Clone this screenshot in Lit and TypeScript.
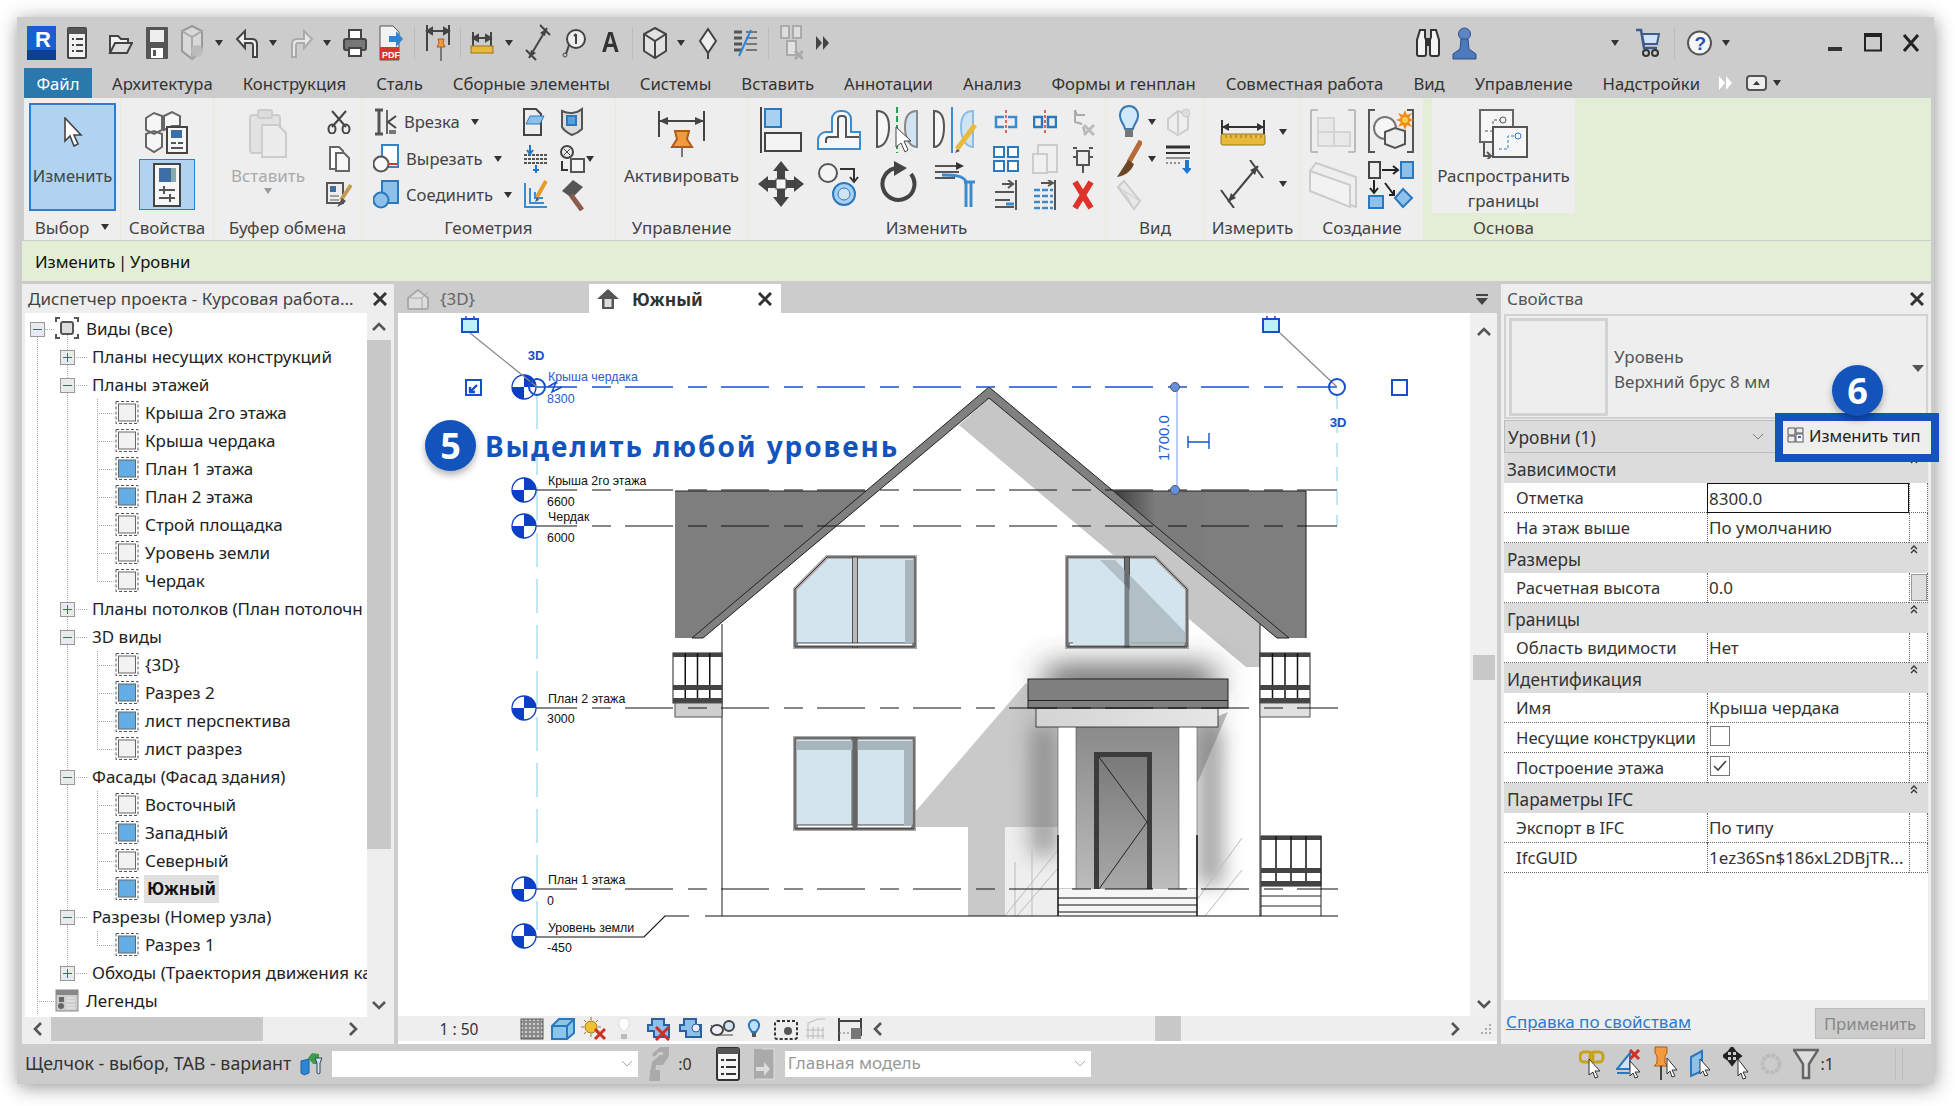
import { LitElement, html, css, svg } from "lit";
import { customElement } from "lit/decorators.js";

// ---- small drawing helpers -------------------------------------------------
const ic = (w: number, h: number, body: unknown) => html`<svg class="ic" width=${w} height=${h} viewBox="0 0 ${w} ${h}">${body}</svg>`;
const caret = () => html`<svg class="caret" width="8" height="6" viewBox="0 0 8 6"><path d="M0 0H8L4 6Z" fill="#333"/></svg>`;

const I: Record<string, unknown> = {
  // quick access bar
  rlogo: ic(30, 34, svg`<rect x="1" y="0" width="29" height="34" fill="#1a5fd0"/><rect x="1" y="24" width="29" height="10" fill="#0d3f94"/><text x="9" y="21" font-size="22" font-weight="700" fill="#fff" font-family="Liberation Sans">R</text>`),
  doc: ic(20, 32, svg`<rect x="1" y="1" width="18" height="30" rx="1" fill="#f2f2f2" stroke="#444" stroke-width="2"/><rect x="1" y="1" width="18" height="6" fill="#555"/><path d="M5 12h2M9 12h7M5 18h2M9 18h7M5 24h2M9 24h7" stroke="#444" stroke-width="2"/>`),
  open: ic(25, 26, svg`<path d="M2 23V6h8l3 3h7v5" fill="#f2f2f2" stroke="#444" stroke-width="2"/><path d="M2 23l5-10h17l-5 10Z" fill="#ddd" stroke="#444" stroke-width="2"/>`),
  save: ic(24, 34, svg`<rect x="1" y="1" width="22" height="32" rx="1" fill="#555"/><rect x="5" y="4" width="14" height="12" fill="#eee"/><rect x="6" y="22" width="12" height="10" fill="#fff"/><rect x="8" y="24" width="3" height="6" fill="#555"/>`),
  sync: ic(25, 36, svg`<path d="M12 1l10 5v20l-10 8-10-8V6Z" fill="#d8d8d8" stroke="#999" stroke-width="2"/><path d="M2 6l10 6 10-6M12 12v22" stroke="#aaa" stroke-width="2" fill="none"/><circle cx="17" cy="26" r="6" fill="#bbb"/>`),
  undo: ic(25, 32, svg`<path d="M22 30V17c0-3-2-5-5-5H10V4L2 12l8 9v-5h6c2 0 2 1 2 3v11Z" fill="#eee" stroke="#444" stroke-width="2"/>`),
  redo: ic(24, 32, svg`<path d="M2 30V17c0-3 2-5 5-5h7V4l8 8-8 9v-5H8c-2 0-2 1-2 3v11Z" fill="#e6e6e6" stroke="#aaa" stroke-width="2"/>`),
  print: ic(24, 30, svg`<rect x="6" y="2" width="12" height="9" fill="#fff" stroke="#444" stroke-width="2"/><rect x="1" y="11" width="22" height="11" rx="2" fill="#777" stroke="#444" stroke-width="2"/><rect x="6" y="20" width="12" height="8" fill="#fff" stroke="#444" stroke-width="2"/>`),
  pdf: ic(24, 36, svg`<path d="M1 1h13l6 6v28H1Z" fill="#f2f2f2" stroke="#555"/><rect x="1" y="22" width="19" height="13" fill="#d6372c"/><text x="3" y="33" font-size="9" font-weight="700" fill="#fff" font-family="Liberation Sans">PDF</text><path d="M10 11h7V6l7 8-7 8v-5h-7Z" fill="#2c86d6"/>`),
  dimpin: ic(26, 38, svg`<path d="M2 1v26M24 1v20" stroke="#444" stroke-width="2"/><path d="M2 7h22M2 7l5-3v6ZM24 7l-5-3v6Z" stroke="#444" stroke-width="2" fill="#444"/><path d="M13 15h6l-1 4 2 4h-8l2-4Z" fill="#f29a3e" stroke="#b0591b"/><path d="M16 23v14" stroke="#777" stroke-width="2"/>`),
  aligndim: ic(24, 28, svg`<path d="M3 3v14M21 3v14M3 9h18M3 9l5-3v6ZM21 9l-5-3v6Z" stroke="#444" stroke-width="2" fill="#444"/><rect x="1" y="17" width="22" height="7" fill="#e8b93a" stroke="#97761e"/>`),
  diag: ic(26, 38, svg`<path d="M4 34L22 4M1 26l10 10M15 1l10 10" stroke="#444" stroke-width="2"/><path d="M4 34l2-8 5 3ZM22 4l-2 8-5-3Z" fill="#444"/>`),
  tag: ic(24, 30, svg`<circle cx="14" cy="11" r="9" fill="#eee" stroke="#444" stroke-width="2"/><path d="M14 6v10M12 8l2-2" stroke="#444" stroke-width="2"/><path d="M7 17L4 26" stroke="#444" stroke-width="2"/><circle cx="3" cy="27" r="2" fill="none" stroke="#444"/>`),
  cube: ic(24, 32, svg`<path d="M12 1l11 6v17l-11 7-11-7V7Z" fill="#e2e2e2" stroke="#444" stroke-width="2"/><path d="M1 7l11 7 11-7M12 14v17" stroke="#444" stroke-width="2" fill="none"/>`),
  gem: ic(20, 32, svg`<path d="M10 2l8 12-8 12-8-12Z" fill="#eee" stroke="#444" stroke-width="2"/><path d="M10 26v6" stroke="#444" stroke-width="2"/>`),
  thin: ic(25, 28, svg`<path d="M1 3h8M1 9h8M1 15h8M1 21h8" stroke="#555" stroke-width="3"/><path d="M13 3h11M13 9h11M13 15h11M13 21h11" stroke="#777" stroke-width="2"/><path d="M6 27L18 1" stroke="#2c86d6" stroke-width="2"/>`),
  greyq: ic(23, 36, svg`<rect x="1" y="1" width="8" height="12" fill="#ddd" stroke="#aaa" stroke-width="2"/><rect x="13" y="1" width="8" height="12" fill="#ddd" stroke="#aaa" stroke-width="2"/><rect x="7" y="16" width="9" height="14" fill="#e2e2e2" stroke="#aaa" stroke-width="2"/><path d="M15 26l8 8M23 26l-8 8" stroke="#aaa" stroke-width="3"/>`),
  more: ic(15, 18, svg`<path d="M1 2l6 7-6 7ZM8 2l6 7-6 7Z" fill="#444"/>`),
  binoc: ic(24, 30, svg`<g fill="#f4f4f4" stroke="#333" stroke-width="2"><path d="M4 2h5v7l1 3v14a2 2 0 0 1-2 2H3a2 2 0 0 1-2-2V12Z"/><path d="M20 2h-5v7l-1 3v14a2 2 0 0 0 2 2h5a2 2 0 0 0 2-2V12Z"/></g><rect x="10" y="10" width="4" height="8" fill="#333"/>`),
  user: ic(25, 34, svg`<circle cx="12.5" cy="8" r="6" fill="#5f86c4" stroke="#2d4f88"/><path d="M9 13h7l1 10 7 5v5H1v-5l7-5Z" fill="#4f79bd" stroke="#2d4f88"/>`),
  cart: ic(25, 30, svg`<path d="M1 2h5l3 18h13" fill="none" stroke="#3c5a8c" stroke-width="2.5"/><path d="M7 6h17l-2 10H9Z" fill="#cfe3f2" stroke="#3c5a8c" stroke-width="2"/><circle cx="11" cy="25" r="3" fill="none" stroke="#333" stroke-width="2"/><circle cx="20" cy="25" r="3" fill="none" stroke="#333" stroke-width="2"/>`),
  help: ic(25, 26, svg`<circle cx="12.5" cy="13" r="11.5" fill="#f6f6f6" stroke="#555" stroke-width="2"/><text x="7.5" y="20" font-size="19" font-weight="700" fill="#2752b0" font-family="Liberation Sans">?</text>`),
  tabicon: ic(21, 16, svg`<rect x="1" y="1" width="19" height="14" rx="3" fill="#eee" stroke="#555" stroke-width="2"/><path d="M7 10l3.5-4 3.5 4Z" fill="#333"/>`),
  // ribbon
  cursor: ic(20, 30, svg`<path d="M2 1v23l5-5 4 10 4-2-4-9h7Z" fill="#fff" stroke="#444" stroke-width="1.6"/>`),
  typeprops: ic(46, 46, svg`<path d="M2 10l8-5 8 3v14l-8 4-8-4Z M20 8l8-4 8 4v10h-8l-8 4Z M2 26l8-3 8 3v13l-8 5-8-5Z" fill="#f6f6f6" stroke="#666" stroke-width="2"/><rect x="23" y="19" width="20" height="26" fill="#f6f6f6" stroke="#444" stroke-width="2"/><rect x="27" y="22" width="11" height="8" fill="#3d6ea5"/><path d="M27 35h5M34 35h5M27 40h12" stroke="#555" stroke-width="2"/>`),
  props: ic(28, 44, svg`<rect x="1" y="1" width="26" height="42" fill="#f6f6f6" stroke="#444" stroke-width="2"/><rect x="6" y="5" width="12" height="14" fill="#3d6ea5"/><rect x="18" y="5" width="5" height="14" fill="#8aa"/><path d="M6 27h16M6 35h16M11 23v8M17 31v8" stroke="#555" stroke-width="2"/>`),
  paste: ic(40, 50, svg`<rect x="2" y="6" width="30" height="38" rx="3" fill="#e2e2e2" stroke="#ccc" stroke-width="2"/><rect x="10" y="1" width="14" height="8" rx="2" fill="#ddd" stroke="#ccc" stroke-width="2"/><path d="M14 16h16l8 8v24H14Z" fill="#ececec" stroke="#ccc" stroke-width="2"/>`),
  scissors: ic(24, 24, svg`<path d="M5 1l14 16M19 1L5 17" stroke="#444" stroke-width="2"/><ellipse cx="5" cy="19" rx="3.5" ry="4.5" fill="none" stroke="#444" stroke-width="2"/><ellipse cx="19" cy="19" rx="3.5" ry="4.5" fill="none" stroke="#444" stroke-width="2"/>`),
  copy: ic(24, 26, svg`<path d="M3 1h9l4 4v18H3Z" fill="#fff" stroke="#666" stroke-width="2"/><path d="M9 7h8l5 5v13H9Z" fill="#f6f6f6" stroke="#666" stroke-width="2"/>`),
  matchbrush: ic(26, 26, svg`<rect x="1" y="1" width="16" height="20" fill="#eee" stroke="#555" stroke-width="2"/><rect x="4" y="4" width="6" height="6" fill="#3d6ea5"/><path d="M4 14h9M4 18h9" stroke="#555"/><path d="M25 3L15 18" stroke="#c79a52" stroke-width="4"/><path d="M16 16l-5 9 6-3 3-3Z" fill="#555"/>`),
  cutin: ic(24, 28, svg`<path d="M2 2h8M2 26h8M6 2v24" stroke="#555" stroke-width="3"/><path d="M14 2v24" stroke="#666" stroke-width="2"/><path d="M23 8l-8 6 8 6" fill="none" stroke="#444" stroke-width="2"/><rect x="16" y="22" width="7" height="4" fill="#777"/>`),
  cutout: ic(26, 30, svg`<rect x="9" y="1" width="16" height="22" fill="#fff" stroke="#3d80c0" stroke-width="2"/><circle cx="8" cy="20" r="7.5" fill="#f8f8f8" stroke="#555" stroke-width="2"/><path d="M15 20h9" stroke="#d6372c" stroke-width="2"/>`),
  join: ic(26, 30, svg`<rect x="9" y="1" width="16" height="22" fill="#8dc1ea" stroke="#2c78bf" stroke-width="2"/><circle cx="8" cy="20" r="7.5" fill="#8dc1ea" stroke="#2c78bf" stroke-width="2"/>`),
  g1: ic(26, 30, svg`<path d="M2 2h12l5 5v21H2Z" fill="#eee" stroke="#444" stroke-width="2"/><path d="M22 9H8l-4 8h14Z" fill="#8dc1ea" stroke="#2c78bf"/>`),
  g2: ic(24, 30, svg`<path d="M2 4c6 3 14 3 20-2v20c-4 4-10 6-10 6-4-2-8-4-10-8Z" fill="#ddd" stroke="#555" stroke-width="2"/><rect x="7" y="9" width="9" height="9" fill="#5aa1dc" stroke="#2c78bf" stroke-width="2"/>`),
  g3: ic(26, 28, svg`<path d="M2 10h24M2 14h24M2 18h24" stroke="#555" stroke-width="2" stroke-dasharray="3 1"/><path d="M8 0v8M5 5l3 4 3-4M14 20v8M11 25h6" stroke="#1a78d0" stroke-width="2" fill="none"/>`),
  g4: ic(26, 30, svg`<circle cx="7" cy="8" r="6" fill="#e8e8e8" stroke="#444" stroke-width="2"/><path d="M4 5l6 6M10 5l-6 6" stroke="#444"/><rect x="11" y="15" width="13" height="13" fill="#f4f4f4" stroke="#555" stroke-width="2"/><path d="M2 17v9h6" fill="none" stroke="#333" stroke-width="2"/>`),
  g5: ic(26, 30, svg`<path d="M3 3v24h22" fill="none" stroke="#3b8bd0" stroke-width="2"/><path d="M8 8v15h14M13 12v6h8" fill="none" stroke="#3b8bd0" stroke-width="2"/><path d="M24 1l-9 16" stroke="#e89b2c" stroke-width="4"/><path d="M15 17l-2 5 4-2Z" fill="#555"/>`),
  g6: ic(26, 32, svg`<path d="M2 12L13 1l10 7-11 11Z" fill="#555"/><path d="M11 16l11 15" stroke="#8c5c4c" stroke-width="5"/>`),
  activate: ic(52, 46, svg`<path d="M3 0v26M48 0v30" stroke="#444" stroke-width="2"/><path d="M3 10h45" stroke="#444" stroke-width="2"/><path d="M3 10l9-4v8ZM48 10l-9-4v8Z" fill="#444"/><path d="M19 20h14l-2 8 5 8H16l5-8Z" fill="#f29a3e" stroke="#b0591b" stroke-width="2"/><path d="M26 36v10" stroke="#777" stroke-width="2"/>`),
  align: ic(44, 46, svg`<path d="M2 0v46" stroke="#444" stroke-width="2"/><rect x="6" y="2" width="16" height="18" fill="#a8d0f0" stroke="#2c78bf" stroke-width="2"/><rect x="6" y="26" width="36" height="18" fill="#f4f4f4" stroke="#444" stroke-width="2"/>`),
  offset: ic(46, 46, svg`<path d="M2 42v-9a8 8 0 0 1 8-8h6V12a8 8 0 0 1 8-8h3a8 8 0 0 1 8 8v13h9v17Z" fill="#f6f6f6" stroke="#3b8bd0" stroke-width="2"/><path d="M10 36v-3a3 3 0 0 1 3-3h9V12a3 3 0 0 1 3-3h2a3 3 0 0 1 3 3v18h13" fill="none" stroke="#555" stroke-width="2"/>`),
  mirrorpick: ic(42, 46, svg`<path d="M1 4c8 0 12 6 12 16s-4 20-12 20Z" fill="#f6f6f6" stroke="#555" stroke-width="2"/><path d="M41 4c-8 0-12 6-12 16s4 20 12 20Z" fill="#cfe3f2" stroke="#888" stroke-width="2"/><path d="M21 0v46" stroke="#2f9f4f" stroke-width="2" stroke-dasharray="6 3"/><path d="M20 20v20l5-4 4 9 3-2-4-9h7Z" fill="#fff" stroke="#444"/>`),
  mirrordraw: ic(44, 46, svg`<path d="M1 4c7 0 10 6 10 16s-3 20-10 20Z" fill="#f6f6f6" stroke="#555" stroke-width="2"/><path d="M40 4c-8 0-12 6-12 16s4 20 12 20Z" fill="#cfe3f2" stroke="#8bbde4" stroke-width="2"/><path d="M19 0v46" stroke="#3b8bd0" stroke-width="2"/><path d="M42 18L24 42" stroke="#e8b93a" stroke-width="5"/><path d="M24 42l-2 4 5-2Z" fill="#555"/>`),
  move: ic(46, 46, svg`<path d="M23 0l8 10H27v8h-8v-8h-4ZM23 46l8-10H27v-8h-8v8h-4ZM0 23l10-8v4h8v8h-8v4ZM46 23l-10-8v4h-8v8h8v4Z" fill="#444"/><rect x="18" y="18" width="10" height="10" fill="#f6f6f6" stroke="#444"/>`),
  copy2: ic(42, 46, svg`<circle cx="10" cy="12" r="9" fill="#f4f4f4" stroke="#555" stroke-width="2"/><circle cx="26" cy="33" r="11" fill="#a8d0f0" stroke="#2c78bf" stroke-width="2"/><circle cx="26" cy="33" r="6" fill="#cfe3f2" stroke="#2c78bf"/><path d="M22 8h14v12M32 16l4 5 4-5" fill="none" stroke="#333" stroke-width="2"/>`),
  rotate: ic(40, 46, svg`<path d="M20 7a16 16 0 1 0 14 6" fill="none" stroke="#444" stroke-width="4"/><path d="M17 0l13 7-13 8Z" fill="#444"/>`),
  trim: ic(42, 46, svg`<path d="M1 5h26M1 11h24M1 17h20" stroke="#555" stroke-width="2"/><path d="M22 1l8 4-8 4Z" fill="#333"/><path d="M30 21h11M32 21v25M37 21v25" stroke="#3b8bd0" stroke-width="3"/><path d="M8 14c10 0 22 0 24 7" stroke="#3b8bd0" stroke-width="3" fill="none"/>`),
  s1: ic(24, 24, svg`<path d="M12 0v24" stroke="#d6372c" stroke-dasharray="3 2" stroke-width="1.5"/><path d="M10 7H2v10h8M14 7h8v10h-8" fill="none" stroke="#3b8bd0" stroke-width="2.5"/>`),
  s2: ic(24, 24, svg`<path d="M12 0v24" stroke="#d6372c" stroke-dasharray="3 2" stroke-width="1.5"/><rect x="1" y="7" width="8" height="10" fill="none" stroke="#2c78bf" stroke-width="2.5"/><rect x="15" y="7" width="8" height="10" fill="none" stroke="#2c78bf" stroke-width="2.5"/>`),
  s3: ic(24, 30, svg`<path d="M4 3l2 5h8M12 20l2 6M4 3v12l7 2" fill="none" stroke="#aaa" stroke-width="2"/><path d="M13 18l10 10M23 18L13 28" stroke="#bbb" stroke-width="3"/>`),
  s4: ic(26, 26, svg`<g fill="#fff" stroke="#2c78bf" stroke-width="2"><rect x="1" y="1" width="10" height="10"/><rect x="15" y="1" width="10" height="10"/><rect x="1" y="15" width="10" height="10"/><rect x="15" y="15" width="10" height="10"/></g>`),
  s5: ic(26, 30, svg`<rect x="6" y="1" width="19" height="27" fill="#f0f0f0" stroke="#ccc" stroke-width="2"/><rect x="1" y="10" width="14" height="19" fill="#f0f0f0" stroke="#ccc" stroke-width="2"/>`),
  s6: ic(22, 28, svg`<path d="M5 6h12v14H5ZM1 3h4M17 3h4M11 20v8M1 12h4M17 12h4" fill="none" stroke="#555" stroke-width="2"/>`),
  s7: ic(24, 30, svg`<path d="M22 0v30" stroke="#555" stroke-width="2"/><path d="M1 12h19M1 20h15M1 27h19M8 4h12M14 0l5 4-5 4" fill="none" stroke="#555" stroke-width="2"/><path d="M12 24h8" stroke="#3b8bd0" stroke-width="3"/>`),
  s8: ic(24, 30, svg`<path d="M22 0v30" stroke="#555" stroke-width="2"/><path d="M1 10h19M1 16h19M1 22h19M1 28h19" stroke="#3b8bd0" stroke-width="2.5" stroke-dasharray="6 2"/><path d="M8 3h12M15 0l5 3-5 3" fill="none" stroke="#555" stroke-width="2"/>`),
  redx: ic(22, 30, svg`<path d="M3 2l16 26M19 2L3 28" stroke="#e0322a" stroke-width="6"/>`),
  bulb: ic(22, 34, svg`<path d="M11 1a9 9 0 0 1 9 10c0 6-5 9-5 13H7c0-4-5-7-5-13a9 9 0 0 1 9-10Z" fill="#cfe8fa" stroke="#3b78b0" stroke-width="2"/><rect x="7" y="24" width="8" height="8" fill="#777"/>`),
  v2: ic(26, 30, svg`<path d="M3 12l10-8 10 4v14l-10 6-10-6Z" fill="#eee" stroke="#ccc" stroke-width="2"/><path d="M13 4v22" stroke="#ccc" stroke-width="2"/><circle cx="21" cy="6" r="4" fill="#ddd" stroke="#ccc"/>`),
  brush: ic(26, 38, svg`<path d="M25 1L13 22" stroke="#b8693a" stroke-width="5"/><path d="M12 20l-11 17c7-1 14-5 17-13Z" fill="#6d4522"/>`),
  v4: ic(26, 30, svg`<path d="M1 3h24" stroke="#333" stroke-width="3"/><path d="M1 9h24" stroke="#333" stroke-width="2"/><path d="M1 14h24" stroke="#333"/><path d="M1 19h16" stroke="#333" stroke-dasharray="2 2"/><path d="M20 16v8h-3l5 6 5-6h-3v-8Z" fill="#1a78d0"/>`),
  eraser: ic(26, 32, svg`<path d="M2 8l6-6 16 20-6 8Z" fill="#e8e8e8" stroke="#ccc" stroke-width="2"/><path d="M2 8l6 4 16 10M8 12l10 18" stroke="#ccc" fill="none"/>`),
  dimalign: ic(46, 28, svg`<path d="M2 2v14M44 2v14M2 9h42" stroke="#333" stroke-width="2"/><path d="M2 9l7-4v8ZM44 9l-7-4v8Z" fill="#333"/><rect x="1" y="16" width="44" height="11" rx="2" fill="#e8b93a" stroke="#97761e"/><path d="M6 17v3M11 17v3M16 17v3M21 17v3M26 17v3M31 17v3M36 17v3M41 17v3" stroke="#97761e"/>`),
  dimdiag: ic(46, 48, svg`<path d="M8 42L38 6M1 30l13 18M30 0l13 18" stroke="#444" stroke-width="2"/><path d="M8 42l3-9 5 5ZM38 6l-3 9-5-5Z" fill="#444"/>`),
  c1: ic(48, 46, svg`<path d="M2 2h7M39 2h7M2 44h7M39 44h7M2 2v42M46 2v42" stroke="#bbb" stroke-width="2"/><g fill="#e8e8e8" stroke="#d4d4d4" stroke-width="2"><path d="M9 10h16v14H9Z"/><path d="M25 24h16v14H25Z"/><path d="M9 24h16v14H9Z"/></g>`),
  c2: ic(48, 46, svg`<path d="M8 2H2v42h6M40 2h6v42h-6" fill="none" stroke="#555" stroke-width="2"/><circle cx="18" cy="20" r="11" fill="#f6f6f6" stroke="#777" stroke-width="2"/><path d="M18 24l10-4 10 3v13l-10 4-10-4Z" fill="#eee" stroke="#555" stroke-width="2"/><path d="M38 2l2 5 5-2-3 5 5 2-5 2 3 5-5-2-2 5-2-5-5 2 3-5-5-2 5-2-3-5 5 2Z" fill="#f08a1c"/><circle cx="38" cy="12" r="3" fill="#f8d040"/>`),
  c3: ic(50, 48, svg`<path d="M2 10l6-8 40 14v30L8 32Z" fill="#eee" stroke="#ccc" stroke-width="2"/><path d="M2 10l40 14v22L2 30Z" fill="#f2f2f2" stroke="#ccc" stroke-width="2"/>`),
  c4: ic(46, 48, svg`<rect x="1" y="1" width="11" height="16" fill="#eee" stroke="#444" stroke-width="2"/><rect x="33" y="1" width="12" height="16" fill="#8dc1ea" stroke="#2c78bf" stroke-width="2"/><path d="M14 9h16M25 5l5 4-5 4" fill="none" stroke="#222" stroke-width="2"/><path d="M6 19v12M2 27l4 5 4-5" fill="none" stroke="#222" stroke-width="2"/><path d="M17 22l9 12M26 29v5h-5" fill="none" stroke="#222" stroke-width="2"/><rect x="1" y="35" width="14" height="12" fill="#8dc1ea" stroke="#2c78bf" stroke-width="2"/><path d="M35 28l9 9-9 9-8-9Z" fill="#8dc1ea" stroke="#2c78bf" stroke-width="2"/>`),
  spread: ic(50, 50, svg`<rect x="1" y="1" width="33" height="32" fill="#f6f6f6" stroke="#666" stroke-width="2"/><circle cx="24" cy="11" r="3" fill="none" stroke="#555"/><path d="M6 22h8v-11h7" fill="none" stroke="#555" stroke-dasharray="3 2"/><rect x="14" y="18" width="34" height="30" fill="#f6f6f6" stroke="#555" stroke-width="2"/><circle cx="39" cy="27" r="3" fill="none" stroke="#2c78bf"/><path d="M20 40h9V27h7" fill="none" stroke="#2c78bf" stroke-dasharray="3 2"/><path d="M5 34v13h7M8 43l4 4-4 4" fill="none" stroke="#555" stroke-width="2"/>`),
  // view bar
  hatch: ic(24, 22, svg`<defs><pattern id="dots" width="4" height="4" patternUnits="userSpaceOnUse"><rect width="4" height="4" fill="#8a8a8a"/><circle cx="2" cy="2" r="1.1" fill="#ddd"/></pattern></defs><rect x="1" y="1" width="22" height="20" fill="url(#dots)" stroke="#555"/>`),
  vcube: ic(24, 22, svg`<path d="M1 8l7-7h15v14l-7 6H1Z" fill="#89c7e8" stroke="#2c78bf" stroke-width="2"/><path d="M1 8h15v13M16 8l7-7" stroke="#2c78bf" stroke-width="2" fill="none"/>`),
  sun: ic(26, 24, svg`<circle cx="10" cy="10" r="6" fill="#f0c030" stroke="#a0781c"/><path d="M10 0v3M10 17v3M0 10h3M17 10h3M3 3l2 2M15 15l2 2M17 3l-2 2M3 17l2-2" stroke="#a0781c"/><path d="M14 12l10 10M24 12L14 22" stroke="#cf2e26" stroke-width="3"/>`),
  vbulb: ic(14, 24, svg`<path d="M7 1a5 5 0 0 1 5 6c0 3-2 4-3 7H5c-1-3-3-4-3-7a5 5 0 0 1 5-6Z" fill="#fff" stroke="#ddd"/><rect x="4" y="17" width="6" height="5" fill="#bbb"/>`),
  crop1: ic(24, 24, svg`<path d="M6 2h12v6h5v12H8v-6H2V8h4Z" fill="#8dc1ea" stroke="#2c5f9e" stroke-width="2"/><path d="M10 10l13 13M23 10L10 23" stroke="#cf2e26" stroke-width="3"/>`),
  crop2: ic(24, 24, svg`<path d="M6 2h12v6h5v12H8v-6H2V8h4Z" fill="#8dc1ea" stroke="#2c5f9e" stroke-width="2"/><circle cx="18" cy="11" r="4" fill="#eef" stroke="#2c5f9e"/>`),
  glasses: ic(26, 24, svg`<path d="M2 8l8 10h3L24 18" fill="none" stroke="#444"/><ellipse cx="8" cy="13" rx="6" ry="5" fill="#eef" stroke="#444" stroke-width="2"/><ellipse cx="20" cy="9" rx="5" ry="5" fill="#cfe3f2" stroke="#444" stroke-width="2"/>`),
  smallbulb: ic(14, 22, svg`<path d="M7 2a5 5 0 0 1 5 6c0 3-2 4-3 6H5c-1-2-3-3-3-6a5 5 0 0 1 5-6Z" fill="#bde0f8" stroke="#2c78bf" stroke-width="2"/><rect x="5" y="15" width="4" height="4" fill="#555"/>`),
  cam: ic(24, 24, svg`<rect x="1" y="4" width="22" height="18" rx="2" fill="#eee" stroke="#333" stroke-width="2" stroke-dasharray="3 2"/><circle cx="14" cy="14" r="4" fill="#555"/>`),
  grey2: ic(22, 24, svg`<path d="M3 6l10-4h7M3 6v16M8 10v12M13 10v12M18 10v12M1 13h18M1 19h18" stroke="#bbb" fill="none"/>`),
  dimlock: ic(26, 24, svg`<path d="M2 1v23M24 1v18M2 4h22" stroke="#444" stroke-width="2"/><rect x="14" y="11" width="10" height="11" fill="#777"/><path d="M2 16h12" stroke="#777" stroke-dasharray="2 2"/>`),
  chevL: html`<svg width="12" height="14" viewBox="0 0 12 14"><path d="M9 1L3 7l6 6" fill="none" stroke="#555" stroke-width="2.6"/></svg>`,
  // status bar
  worksets: ic(26, 24, svg`<path d="M10 6l4-5 7 1v10h-6Z" fill="#3f9a4a"/><path d="M3 9l8-2v14l-5 2-3-2Z" fill="#2c86d6" stroke="#1a5f9e"/><path d="M17 6h7l-2 5v10a2 2 0 0 1-3 0V11Z" fill="#cfe3f2" stroke="#345"/>`),
  pencilq: ic(22, 36, svg`<path d="M4 8l8-7h9v9l-6 9H8l-2 16H1l3-19 8-7h3V6h-4L6 11Z" fill="#aaa"/><rect x="2" y="24" width="10" height="11" fill="#aaa"/>`),
  list: ic(24, 34, svg`<rect x="1" y="1" width="22" height="32" rx="2" fill="#f6f6f6" stroke="#333" stroke-width="2"/><rect x="1" y="1" width="22" height="6" fill="#555"/><path d="M5 13h3M10 13h10M5 20h3M10 20h10M5 27h3M10 27h10" stroke="#333" stroke-width="2"/>`),
  enter: ic(22, 32, svg`<rect x="1" y="1" width="20" height="30" fill="#aaa"/><path d="M9 1h12v30H3" fill="none" stroke="#ddd"/><path d="M3 19h8v-5l6 7-6 7v-5H3Z" fill="#ddd"/>`),
  link: ic(26, 30, svg`<rect x="1" y="3" width="13" height="10" rx="4" fill="none" stroke="#c8a218" stroke-width="3"/><rect x="11" y="3" width="13" height="10" rx="4" fill="none" stroke="#c8a218" stroke-width="3"/><path d="M10 10v16l4-3 2 6 3-1-3-6h5Z" fill="#fff" stroke="#333"/>`),
  wedge: ic(26, 30, svg`<path d="M1 20L14 4v16Z" fill="#cfe3f2" stroke="#2c78bf" stroke-width="2"/><path d="M1 24h12" stroke="#2c78bf" stroke-width="2"/><path d="M14 1l9 9M23 1l-9 9" stroke="#cf2e26" stroke-width="3"/><path d="M14 12v15l3-3 2 5 3-1-3-5h5Z" fill="#fff" stroke="#333"/>`),
  pincur: ic(26, 36, svg`<path d="M2 1h12v6l-2 3v7l3 3H1l3-3v-7L2 7Z" fill="#f29a3e" stroke="#b0591b"/><path d="M8 20v14" stroke="#444" stroke-width="2"/><path d="M14 12v16l3-3 2 6 3-1-3-6h5Z" fill="#fff" stroke="#333"/>`),
  facecur: ic(22, 30, svg`<path d="M1 8l11-6v20l-11 5Z" fill="#8dc1ea" stroke="#2c78bf" stroke-width="2"/><path d="M10 10v15l3-3 2 5 3-1-3-5h5Z" fill="#fff" stroke="#333"/>`),
  movecur: ic(26, 34, svg`<path d="M9 0v18M0 9h18M9 0l-3 4h6ZM9 18l-3-4h6ZM0 9l4-3v6ZM18 9l-4-3v6Z" stroke="#222" stroke-width="2" fill="#222"/><path d="M15 12v17l3-3 2 6 3-1-3-6h5Z" fill="#fff" stroke="#333"/>`),
  ring: ic(22, 26, svg`<circle cx="11" cy="13" r="8.5" fill="none" stroke="#bbb" stroke-width="4" stroke-dasharray="4 1"/>`),
  funnel: ic(26, 32, svg`<path d="M1 2h24l-9 14v14H10V16Z" fill="#ddd" stroke="#666" stroke-width="2.5"/>`),
};

const smallX = () => html`<svg width="14" height="14" viewBox="0 0 14 14"><path d="M1 1l12 12M13 1L1 13" stroke="#333" stroke-width="3"/></svg>`;
const chev = (dir: "up" | "down" | "left" | "right") => {
  const d = { up: "M1 8l6-6 6 6", down: "M1 2l6 6 6-6", left: "M9 1L3 7l6 6", right: "M3 1l6 6-6 6" }[dir];
  const vertical = dir === "up" || dir === "down";
  return html`<svg width=${vertical ? 14 : 12} height=${vertical ? 10 : 14} viewBox=${vertical ? "0 0 14 10" : "0 0 12 14"}><path d=${d} fill="none" stroke="#555" stroke-width="2.6"/></svg>`;
};
const thinChev = (c = "#aaa") => html`<svg width="12" height="8" viewBox="0 0 12 8"><path d="M1 1l5 5 5-5" fill="none" stroke=${c}/></svg>`;
const dblUp = () => html`<svg width="8" height="9" viewBox="0 0 8 9"><path d="M1 4l3-3 3 3M1 8l3-3 3 3" fill="none" stroke="#333" stroke-width="1.3"/></svg>`;

// ---- data ---------------------------------------------------------------------
const TABS = ["Архитектура", "Конструкция", "Сталь", "Сборные элементы", "Системы", "Вставить", "Аннотации", "Анализ", "Формы и генплан", "Совместная работа", "Вид", "Управление", "Надстройки"];

type Row = { t: string; l: 0 | 1 | 2; box?: "+" | "-"; fill?: boolean; bold?: boolean; last?: boolean; kind?: "views" | "legend" };
const TREE: Row[] = [
  { t: "Виды (все)", l: 0, box: "-", kind: "views" },
  { t: "Планы несущих конструкций", l: 1, box: "+" },
  { t: "Планы этажей", l: 1, box: "-" },
  { t: "Крыша 2го этажа", l: 2 },
  { t: "Крыша чердака", l: 2 },
  { t: "План 1 этажа", l: 2, fill: true },
  { t: "План 2 этажа", l: 2, fill: true },
  { t: "Строй площадка", l: 2 },
  { t: "Уровень земли", l: 2 },
  { t: "Чердак", l: 2, last: true },
  { t: "Планы потолков (План потолочн", l: 1, box: "+" },
  { t: "3D виды", l: 1, box: "-" },
  { t: "{3D}", l: 2 },
  { t: "Разрез 2", l: 2, fill: true },
  { t: "лист перспектива", l: 2, fill: true },
  { t: "лист разрез", l: 2, last: true },
  { t: "Фасады (Фасад здания)", l: 1, box: "-" },
  { t: "Восточный", l: 2 },
  { t: "Западный", l: 2, fill: true },
  { t: "Северный", l: 2 },
  { t: "Южный", l: 2, fill: true, bold: true, last: true },
  { t: "Разрезы (Номер узла)", l: 1, box: "-" },
  { t: "Разрез 1", l: 2, fill: true, last: true },
  { t: "Обходы (Траектория движения ка", l: 1, box: "+" },
  { t: "Легенды", l: 0, kind: "legend" },
];

const PROPS: ({ head: string } | { k: string; v?: string; cls?: string; check?: boolean; grip?: boolean })[] = [
  { head: "Зависимости" },
  { k: "Отметка", v: "8300.0", cls: "edit" },
  { k: "На этаж выше", v: "По умолчанию" },
  { head: "Размеры" },
  { k: "Расчетная высота", v: "0.0", grip: true },
  { head: "Границы" },
  { k: "Область видимости", v: "Нет" },
  { head: "Идентификация" },
  { k: "Имя", v: "Крыша чердака" },
  { k: "Несущие конструкции", check: false },
  { k: "Построение этажа", check: true },
  { head: "Параметры IFC" },
  { k: "Экспорт в IFC", v: "По типу" },
  { k: "IfcGUID", v: "1ez36Sn$186xL2DBjTR..." },
];

// ---- drawing of the elevation, in page coordinates ---------------------------
const DASH = "48 15 19 14";
const head = (y: number, label: string, value: string, labelY: number, valueY: number, c = "#111", x = 524) => svg`
  <circle cx=${x} cy=${y} r="12" fill="#fff" stroke="#0b3fc4" stroke-width="1.3"/>
  <path d="M${x} ${y}V${y - 12}A12 12 0 0 1 ${x + 12} ${y}ZM${x} ${y}V${y + 12}A12 12 0 0 1 ${x - 12} ${y}Z" fill="#0b3fc4"/>
  <text class="lbl" x="548" y=${labelY} fill=${c}>${label}</text>
  <text class="lbl" x="547" y=${valueY} fill=${c}>${value}</text>`;

const house_window = (x: number, y: number, w: number, h: number, cham: "l" | "r" | "") => {
  const c = cham ? 32 : 0;
  const outer = cham === "l"
    ? `M${x} ${y + h}V${y + c}L${x + c} ${y}H${x + w}V${y + h}Z`
    : cham === "r"
      ? `M${x} ${y + h}V${y}H${x + w - c}L${x + w} ${y + c}V${y + h}Z`
      : `M${x} ${y}H${x + w}V${y + h}H${x}Z`;
  const m = x + w / 2;
  return svg`<path d=${outer} fill="#d4e4ef" stroke="#333" stroke-width="1.4"/>
    <path d=${outer} fill="none" stroke="#aaa" stroke-width="4"/>
    <path d=${outer} fill="none" stroke="#333" stroke-width="1"/>
    <rect x=${m - 2.5} y=${y} width="5" height=${h} fill="#b8b8b8" stroke="#333" stroke-width=".8"/>
    <rect x=${x + 2} y=${y + h - 4} width=${w - 4} height="3" fill="#fff" stroke="#222" stroke-width=".8"/>`;
};

const balcony = (x: number, w: number, y: number, h: number) => {
  const n = 4;
  const bars = [];
  for (let i = 1; i < n; i++) bars.push(svg`<path d="M${x + (w * i) / n} ${y}V${y + h}" stroke="#111" stroke-width="1.5"/>`);
  return svg`<rect x=${x} y=${y} width=${w} height=${h} fill="#fff" stroke="#222"/>
    <rect x=${x} y=${y} width=${w} height="4" fill="#444"/>${bars}
    <rect x=${x} y=${y + h - 18} width=${w} height="5" fill="#444"/>
    <rect x=${x} y=${y + h - 5} width=${w} height="5" fill="#444"/>`;
};

const drawing = () => html`<svg class="draw" width="1072" height="703" viewBox="398 313 1072 703">
  <defs>
    <filter id="b16" x="-60%" y="-120%" width="220%" height="340%"><feGaussianBlur stdDeviation="16"/></filter>
    <filter id="b10" x="-120%" y="-40%" width="340%" height="180%"><feGaussianBlur stdDeviation="10"/></filter>
    <linearGradient id="rs" x1="0" y1="0" x2="1" y2="0"><stop offset="0" stop-color="#3f3f3f"/><stop offset=".45" stop-color="#7c7c7c"/></linearGradient>
    <linearGradient id="door" x1="0" y1="0" x2="0" y2="1"><stop offset="0" stop-color="#7a7a7a"/><stop offset="1" stop-color="#a8a8a8"/></linearGradient>
    <linearGradient id="recess" x1="0" y1="0" x2="0" y2="1"><stop offset="0" stop-color="#8a8a8a"/><stop offset="1" stop-color="#bcbcbc"/></linearGradient>
    <linearGradient id="lint" x1="0" y1="0" x2="1" y2="0"><stop offset="0" stop-color="#d4d4d4"/><stop offset="1" stop-color="#e6e6e6"/></linearGradient>
    <clipPath id="wall"><path d="M722 624L989 398L1260 624V916H722Z"/></clipPath>
  </defs>

  <rect x="675" y="491" width="631" height="147" fill="#7e7e7e"/>
  <rect x="1115" y="491" width="90" height="147" fill="url(#rs)"/>
  <path d="M675 491H1306V638" fill="none" stroke="#222"/>

  <path d="M722 640V916H1260V640Z" fill="#fff"/>
  <path d="M989 398L703 638H722V916H1260V638H1277Z" fill="#fff"/>
  <g clip-path="url(#wall)">
    <path d="M989 398L959 425L1246 667H1260V560Z" fill="#c6c6c6"/>
    <path d="M915 812L1026 683L1060 720V916H968V827H915Z" fill="#c9c9c9"/>
    <rect x="1005" y="827" width="53" height="89" fill="#eee"/>
    <path d="M1197 725L1228 712L1190 800Z" fill="#c0c0c0"/>
    <rect x="1045" y="668" width="170" height="28" fill="#444" filter="url(#b16)"/>
    <rect x="1030" y="725" width="28" height="130" fill="#666" opacity=".55" filter="url(#b10)"/>
    <rect x="1197" y="725" width="26" height="160" fill="#666" opacity=".6" filter="url(#b10)"/>
    <path d="M1005 916L1058 850M1017 916L1058 868M1015 862V916M1032 850V916M1197 900L1242 838M1205 916L1242 870" stroke="#bbb" fill="none"/>
  </g>

  <path d="M989 387L692 638H703L989 398L1277 638H1289Z" fill="#808080" stroke="#222"/>
  <path d="M722 624V916M1260 624V916" stroke="#222"/>

  ${balcony(673, 49, 653, 50)}
  <rect x="675" y="703" width="47" height="14" fill="#cfcfcf" stroke="#555"/>
  ${balcony(1260, 50, 653, 50)}
  <rect x="1260" y="703" width="50" height="14" fill="#e0e0e0" stroke="#555"/>
  ${balcony(1261, 60, 836, 50)}
  <g stroke="#222"><path d="M1261 886V916M1321 836V916M1261 896H1321M1261 906H1321"/></g>

  ${house_window(795, 557, 120, 90, "l")}
  <rect x="905" y="560" width="8" height="83" fill="#a7b5bd"/>
  ${house_window(1067, 557, 120, 90, "r")}
  <path d="M1072 560H1115L1185 632V645H1125V590Z" fill="#a7b5bd" opacity=".8"/>
  <path d="M1072 560H1100L1130 590V645H1073Z" fill="#d4e4ef"/>
  <path d="M1127 557V647" stroke="#333" stroke-width="5" opacity=".55"/>
  ${house_window(795, 738, 119, 91, "")}
  <rect x="797" y="741" width="115" height="9" fill="#a7b5bd"/>
  <path d="M855 738V829" stroke="#666" stroke-width="5"/>
  <rect x="904" y="741" width="8" height="85" fill="#a7b5bd"/>

  <rect x="1076" y="726" width="103" height="163" fill="url(#recess)"/>
  <rect x="1058" y="726" width="18" height="163" fill="#fff" stroke="#555" stroke-width=".6"/>
  <rect x="1179" y="726" width="18" height="163" fill="#fff" stroke="#555" stroke-width=".6"/>
  <rect x="1094" y="752" width="58" height="137" fill="#3c3c3c"/>
  <rect x="1099" y="757" width="48" height="132" fill="url(#door)"/>
  <path d="M1099 757L1147 822L1099 889" fill="none" stroke="#222"/>

  <rect x="1036" y="708" width="182" height="19" fill="url(#lint)" stroke="#222" stroke-width=".8"/>
  <rect x="1028" y="679" width="200" height="29" fill="#7f7f7f" stroke="#222"/>
  <path d="M1028 700.500H1228" stroke="#222"/>

  <rect x="1058" y="889" width="139" height="27" fill="#f6f6f6"/>
  <path d="M1058 898H1197M1058 905H1197M1058 912H1197" stroke="#111"/>
  <path d="M1058 835V916M1197 835V916" stroke="#111" stroke-width="1.5"/>

  <path d="M537 395V930" stroke="#a8dcf0" stroke-width="1.4" stroke-dasharray="34 12"/>
  <path d="M1337 395V526" stroke="#a8dcf0" stroke-width="1.4" stroke-dasharray="14 10"/>

  <path d="M529 387H1337" stroke="#1b50d0" stroke-width="1.3" stroke-dasharray=${DASH}/>
  <path d="M529 490H1337M529 526H1337M529 708H1338M529 889H1338" stroke="#111" stroke-width="1.2" stroke-dasharray=${DASH}/>
  <path d="M536 937H644L665 916H689M705 916H1338" fill="none" stroke="#111" stroke-width="1.1"/>

  ${head(387, "Крыша чердака", "8300", 381, 403, "#2a5bd0")}
  ${head(490, "Крыша 2го этажа", "6600", 485, 506)}
  ${head(526, "Чердак", "6000", 521, 542)}
  ${head(708, "План 2 этажа", "3000", 703, 723)}
  ${head(889, "План 1 этажа", "0", 884, 905)}
  ${head(936, "Уровень земли", "-450", 932, 952)}

  <path d="M470 333L537 387M1280 333L1337 387" stroke="#888" stroke-width="1.2"/>
  <g fill="#bdf0f8" stroke="#1550c8" stroke-width="2"><rect x="462" y="319" width="16" height="13"/><rect x="1263" y="319" width="16" height="13"/></g>
  <g stroke="#1550c8" stroke-width="1.5"><path d="M466 316v3M474 316v3M1267 316v3M1275 316v3"/></g>
  <g fill="none" stroke="#1550c8" stroke-width="2"><circle cx="537" cy="387" r="8"/><circle cx="1337" cy="387" r="8"/></g>
  <path d="M548 387L556 382L552 392L562 387" fill="none" stroke="#1550c8" stroke-width="1.5"/>
  <text class="td" x="536" y="360">3D</text>
  <text class="td" x="1338" y="427">3D</text>
  <rect x="466" y="380" width="15" height="15" fill="#fff" stroke="#1550c8" stroke-width="2"/>
  <path d="M470 392L477 385M470 387V392H475" fill="none" stroke="#1550c8" stroke-width="2.4"/>
  <rect x="1392" y="380" width="15" height="15" fill="#fff" stroke="#1550c8" stroke-width="2"/>

  <path d="M1177 387V490" stroke="#9bb8f0" stroke-width="1.4"/>
  <g fill="#6490dc" stroke="#555"><circle cx="1175" cy="387" r="4.500"/><circle cx="1175" cy="490" r="4.500"/></g>
  <text class="dim" transform="translate(1169 461) rotate(-90)" font-size="15">1700.0</text>
  <path d="M1188 436V448M1209 433V449M1188 442H1209" fill="none" stroke="#1550c8" stroke-width="1.4"/>
</svg>`;

// [icon name or null for a separator, margin-left]
type Gap = [string | null, number];
const QAT_LEFT: Gap[] = [["rlogo", 9], ["doc", 11], ["open", 21], ["save", 12], ["sync", 11], ["caret", 10], ["undo", 12], ["caret", 9], ["redo", 13], ["caret", 9], ["print", 12], ["pdf", 12], [null, 11], ["dimpin", 10], [null, 9], ["aligndim", 9], ["caret", 11], ["diag", 12], ["tag", 11]];
const QAT_MID: Gap[] = [[null, 11], ["cube", 10], ["caret", 10], ["gem", 13], ["thin", 15], [null, 10], ["greyq", 11], ["more", 12]];
const QAT_RIGHT: Gap[] = [["binoc", 0], ["user", 12], ["caret", 134], ["cart", 16], [null, 14], ["help", 12], ["caret", 10]];
const VIEW_TOOLS: Gap[] = [["hatch", 0], ["vcube", 7], ["sun", 6], ["vbulb", 10], ["crop1", 15], ["crop2", 8], ["glasses", 7], ["smallbulb", 12], ["cam", 13], ["grey2", 7], ["dimlock", 10], ["chevL", 9]];

const strip = (list: Gap[]) =>
  list.map(([n, ml]) => (n
    ? html`<span style="margin-left:${ml}px">${n === "caret" ? caret() : I[n]}</span>`
    : html`<span class="sep" style="margin-left:${ml}px"></span>`));

// ---- the page ---------------------------------------------------------------------
@customElement("app-root")
export class AppRoot extends LitElement {
  static styles = css`
    :host { display: block; width: 1955px; height: 1106px; background: #fff; font-family: "Noto Sans", "Open Sans", sans-serif; color: #222; overflow: hidden; }
    .stage { position: relative; width: 1955px; height: 1106px; padding: 17px 0 0 17px; box-sizing: border-box; }
    .window { width: 1917px; height: 1067px; background: #ccc; display: flex; flex-direction: column; box-shadow: 1px 3px 18px rgba(0, 0, 0, .42); }
    svg { display: block; flex: none; }

    /* title row */
    .qat { height: 51px; display: flex; align-items: center; flex: none; }
    .qat .sep { display: block; width: 1px; height: 32px; background: #bbb; flex: none; }
    .qat > * { flex: none; }
    .bigA { margin-left: 14px; font: 700 29px "Liberation Sans", sans-serif; color: #333; transform: scaleX(.85); }
    .wctl { display: flex; align-items: center; margin-left: auto; }
    .wctl .sep { display: block; }
    .min { margin-left: 98px; }
    .max { margin-left: 22px; }
    .close { margin: 0 14px 0 20px; }

    /* tabs */
    .tabs { height: 30px; display: flex; align-items: center; padding-left: 7px; flex: none; font-size: 16.7px; color: #333; white-space: nowrap; }
    .tabs .file { width: 68px; height: 30px; background: #2a78ac; color: #fff; display: flex; align-items: center; justify-content: center; margin-right: 20px; }
    .tabs > span { margin-right: 30px; }
    .tabs .tail { display: flex; align-items: center; margin-left: -12px; }
    .tabs .tail .ff { margin-right: 13px; }
    .tabs .tail .caret { margin-left: 6px; }

    /* ribbon */
    .ribbon { height: 142px; margin: 0 3px 0 7px; background: #e4eed6; display: flex; flex: none; gap: 1px; font-size: 17px; color: #444; }
    .panel { display: flex; flex-direction: column; background: #eee; flex: none; }
    .panel .body { height: 115px; box-sizing: border-box; display: flex; }
    .panel .title { height: 27px; display: flex; align-items: center; justify-content: center; gap: 12px; padding-top: 1px; box-sizing: border-box; }
    .p-sel { width: 96px; }
    .p-prop { width: 92px; }
    .p-clip { width: 147px; }
    .p-geo { width: 253px; }
    .p-act { width: 131px; }
    .p-mod { width: 357px; }
    .p-view { width: 98px; }
    .p-meas { width: 95px; }
    .p-make { width: 122px; }
    .panel.base { width: 143px; background: transparent; margin-left: 8px; }
    .panel.base .body { background: #eee; }
    .bigbtn { display: flex; flex-direction: column; align-items: center; flex: 1; padding-top: 10px; white-space: nowrap; }
    .bigbtn .art { height: 52px; display: flex; align-items: center; }
    .bigbtn .lab { margin-top: 3px; line-height: 25px; text-align: center; }
    .select { width: 87px; height: 108px; margin: 5px 0 0 5px; box-sizing: border-box; background: #afd3f0; border: 2px solid #2b7cd3; display: flex; flex-direction: column; align-items: center; padding-top: 12px; font-size: 16.5px; }
    .select .lab { margin-top: 17px; }
    .col { display: flex; flex-direction: column; align-items: center; flex: 1; padding-top: 10px; }
    .propbtn { width: 56px; height: 51px; margin-top: 5px; box-sizing: border-box; background: #afd3f0; border: 1px solid #2b7cd3; display: flex; align-items: center; justify-content: center; }
    .paste { width: 108px; flex: none; color: #aaa; }
    .paste .caret path { fill: #999; }
    .rows3 { display: grid; grid-template-rows: repeat(3, 36.5px); align-items: center; padding-top: 6px; justify-items: center; }
    .clip { width: 34px; }
    .geo { display: grid; grid-template-columns: 149px 38px 26px 20px; grid-template-rows: repeat(3, 36.5px); align-items: center; padding: 6px 0 0 11px; }
    .geo .cmd { display: flex; align-items: center; gap: 7px; white-space: nowrap; font-size: 16.6px; line-height: 24px; }
    .geo .cmd .caret { margin-left: 4px; }
    .big4 { display: grid; grid-template-columns: repeat(4, 58px); grid-template-rows: 52px 56px; padding: 6px 0 0 4px; justify-items: center; align-items: center; }
    .small3 { display: grid; grid-template-columns: repeat(3, 38.5px); margin-left: 3px; }
    .view { display: grid; grid-template-columns: 30px 16px 36px; padding: 6px 0 0 8px; grid-template-rows: repeat(3, 36.5px); align-items: center; justify-items: center; }
    .measure { display: grid; grid-template-columns: 64px 16px; grid-template-rows: 52px 52px; padding: 8px 0 0 6px; align-items: center; justify-items: center; }
    .create { display: grid; grid-template-columns: 58px 58px; grid-template-rows: 54px 54px; padding: 6px 0 0 3px; justify-items: center; align-items: center; }

    /* context bar */
    .ctx { height: 40px; margin: 1px 3px 3px 5px; background: #e4eed6; flex: none; display: flex; align-items: center; padding-left: 13px; font-size: 16.7px; color: #111; word-spacing: -1.5px; }

    /* work area */
    .work { height: 760px; margin-left: 5px; display: flex; flex: none; }
    .pane { background: #eee; display: flex; flex-direction: column; flex: none; }
    .phead { height: 29px; display: flex; align-items: center; justify-content: space-between; padding: 0 7px 0 6px; font-size: 17px; color: #555; flex: none; }
    .browser { width: 372px; padding-bottom: 3px; box-sizing: border-box; }
    .browser .phead { color: #444; }
    .tmain { display: flex; height: 704px; margin-left: 3px; flex: none; }
    .tree { width: 342px; background: #fff; overflow: hidden; padding-top: 2px; box-sizing: border-box; flex: none; }
    .row { height: 28px; display: flex; align-items: center; white-space: nowrap; font-size: 17px; color: #222; }
    .row span { padding-bottom: 2px; }
    .row .t0 { margin-left: -61px; }
    .row .t1 { margin-left: -55px; }
    .row .t2 { margin-left: -2px; }
    .row .sel { background: #e0e0e0; font-weight: 700; color: #111; height: 28px; box-sizing: border-box; display: flex; align-items: center; padding: 0 3px 2px; margin-left: -3px; }
    .vbar { width: 24px; flex: none; display: flex; flex-direction: column; align-items: center; }
    .vbar .up { height: 27px; display: flex; align-items: center; justify-content: center; flex: none; }
    .vbar .thumb { width: 24px; height: 509px; background: #c8c8c8; flex: none; }
    .vbar .dn { margin-top: auto; height: 24px; display: flex; align-items: center; flex: none; }
    .hbar { height: 24px; margin-left: 3px; width: 366px; display: flex; align-items: center; flex: none; }
    .hbar .arr { width: 26px; display: flex; justify-content: center; flex: none; }
    .hbar .thumb { width: 212px; height: 24px; background: #c8c8c8; flex: none; }
    .hbar .arr.end { margin: 0 22px 0 auto; width: 32px; }

    .center { width: 1099px; margin-left: 4px; background: #fff; }
    .vtabs { height: 29px; background: #ccc; display: flex; flex: none; font-size: 17px; }
    .vtab { display: flex; align-items: center; flex: none; }
    .vtab.off { width: 191px; padding-left: 8px; box-sizing: border-box; gap: 10px; color: #666; }
    .vtab.on { width: 192px; background: #fff; padding: 0 9px 0 7px; box-sizing: border-box; gap: 12px; font-weight: 700; color: #333; font-size: 17.5px; }
    .vtab.on .x { margin-left: auto; }
    .vtabs .menu { margin-left: auto; margin-right: 9px; align-self: center; }
    .cmain { height: 703px; display: flex; flex: none; }
    .cbar { width: 27px; background: #f0f0f0; display: flex; flex-direction: column; align-items: center; flex: none; }
    .cbar .up { height: 26px; flex: none; display: flex; align-items: center; margin-top: 6px; }
    .cbar .thumb { width: 22px; height: 25px; background: #c8c8c8; margin-top: 310px; flex: none; }
    .cbar .dn { margin-top: auto; height: 24px; display: flex; align-items: center; flex: none; }
    .vbarb { height: 25px; background: #eee; display: flex; align-items: center; flex: none; }
    .vbarb .scale { width: 122px; text-align: center; font-size: 15.5px; color: #333; flex: none; box-sizing: border-box; }
    .vbarb .tools { display: flex; align-items: center; flex: none; }
    .vbarb .thumb { width: 26px; height: 25px; background: #c8c8c8; margin-left: 271px; flex: none; }
    .vbarb .rarr { margin-left: 268px; flex: none; }
    .vbarb .grip { margin-left: 20px; flex: none; }

    .propsp { width: 430px; margin-left: 4px; padding: 0 3px 5px; box-sizing: border-box; }
    .propsp .phead { margin: 0 -3px; }
    .typebox { height: 105px; margin-top: 1px; box-sizing: border-box; border: 2px solid #d2d2d2; flex: none; display: flex; align-items: center; padding: 0 0 0 3px; position: relative; font-size: 17px; color: #555; gap: 6px; }
    .typebox .thumb { width: 99px; height: 98px; box-sizing: border-box; border: 3px solid #d2d2d2; background: #eee; flex: none; }
    .typebox .tx { line-height: 25px; padding-top: 5px; }
    .typebox .drop { position: absolute; right: 2px; top: 49px; }
    .filter { height: 33px; margin-top: 1px; background: #dcdcdc; border: 1px solid #bbb; box-sizing: border-box; display: flex; align-items: center; padding: 0 7px 0 3px; flex: none; font-size: 17.4px; color: #333; }
    .filter .chev { margin-left: auto; margin-right: 156px; }
    .ptable { display: grid; grid-template-columns: 203px 202px 19px; flex: none; font-size: 17px; color: #333; background: #fff; }
    .ptable > div { height: 30px; box-sizing: border-box; display: flex; align-items: center; border-bottom: 1px dotted #666; border-left: 1px dotted #666; white-space: nowrap; overflow: hidden; }
    .ptable .pk { padding-left: 12px; border-left: none; font-size: 16.7px; }
    .ptable .pv { padding-left: 1px; }
    .ptable .ps { border-right: 1px dotted #666; justify-content: center; }
    .ptable .phd { grid-column: 1 / 4; background: #dcdcdc; border: none; padding: 2px 10px 0 3px; font-size: 17.2px; justify-content: space-between; align-items: flex-start; line-height: 29px; }
    .ptable .phd svg { margin-top: 0; }
    .ptable .edit { border: 1px solid #111; padding-left: 1px; background: #fff; }
    .ptable .ck { width: 20px; height: 20px; box-sizing: border-box; border: 1px solid #777; background: #fff; margin-left: 1px; margin-bottom: 3px; }
    .gripb { width: 16px; height: 27px; background: #ddd; border: 1px solid #999; box-sizing: border-box; }
    .pfill { flex: 1; background: #fff; }
    .pfoot { height: 39px; flex: none; display: flex; align-items: flex-end; justify-content: space-between; padding: 0 3px 0 2px; font-size: 17px; }
    .pfoot a { color: #2a7ad0; text-decoration: underline; margin-bottom: 6px; }
    .apply { width: 110px; height: 31px; background: #ccc; border: 1px solid #bbb; box-sizing: border-box; color: #888; font-size: 16.7px; display: flex; align-items: center; justify-content: center; }

    /* status */
    .status { height: 40px; display: flex; align-items: center; flex: none; font-size: 17.8px; color: #333; padding-left: 8px; white-space: nowrap; }
    .status .hint { padding-bottom: 2px; }
    .status .sb-work { margin-left: 7px; }
    .status .field { height: 26px; background: #fff; display: flex; align-items: center; justify-content: flex-end; flex: none; box-sizing: border-box; padding-right: 5px; font-size: 17px; width: 306px; margin-left: 8px; }
    .status .sb-pen { margin-left: 10px; }
    .status .sb-zero { margin-left: 8px; font-size: 16px; }
    .status .sb-list { margin-left: 24px; }
    .status .sb-enter { margin-left: 13px; }
    .status .model { justify-content: space-between; padding-left: 3px; color: #999; margin-left: 10px; }
    .status .model .hint { padding-bottom: 3px; }
    .status .right { display: flex; align-items: center; margin-left: auto; gap: 11px; margin-right: 31px; font-size: 16px; }
    .status .filt { display: flex; align-items: center; gap: 2px; }
    .status .seps { display: flex; gap: 6px; margin-left: 50px; }
    .status .vsep { width: 1px; height: 32px; background: #bbb; }

    /* tutorial callouts */
    .mark { position: absolute; width: 51px; height: 51px; border-radius: 50%; background: #1254bb; color: #fff; font-weight: 700; font-size: 36px; display: flex; align-items: center; justify-content: center; box-shadow: 0 4px 7px rgba(0, 0, 0, .3); }
    .mark.five { left: 425px; top: 420px; }
    .mark.six { left: 1832px; top: 365px; }
    .howto { position: absolute; left: 485px; top: 427px; font-size: 28px; font-weight: 700; letter-spacing: 1.9px; color: #1254bb; white-space: nowrap; }
    .typebtn { position: absolute; left: 1775px; top: 413px; width: 164px; height: 49px; box-sizing: border-box; border: 8px solid #1254bb; background: #eee; display: flex; align-items: center; padding: 0 0 5px 4px; gap: 5px; font-size: 16.5px; color: #222; white-space: nowrap; }

    .draw .lbl { font: 12.4px "Liberation Sans", sans-serif; }
    .draw .td { font: 700 13px "Liberation Sans", sans-serif; fill: #1550c8; text-anchor: middle; }
    .draw .dim { font-family: "Liberation Sans", sans-serif; fill: #1f5cd6; }
  `;

  private row(r: Row, i: number) {
    const x = r.l === 0 ? 37 : r.l === 1 ? 67 : 97;
    // the gutter holds guide lines, expander box and view icon for this row
    const dots = "1 1";
    return html`<div class="row">
      <svg width="122" height="28" viewBox="25 0 122 28">
        <path d="M37.500 ${i === 0 ? 14 : 0}V28" stroke="#aaa" stroke-dasharray=${dots}/>
        ${r.l !== 0 ? svg`<path d="M67.500 0V${r.t.startsWith("Обходы") ? 14 : 28}" stroke="#aaa" stroke-dasharray=${dots}/>` : null}
        ${i === 0 ? svg`<path d="M67.500 20V28" stroke="#aaa" stroke-dasharray=${dots}/>` : null}
        ${r.l === 2 ? svg`<path d="M97.500 0V${r.last ? 14 : 28}M97 14.500H114" stroke="#aaa" stroke-dasharray=${dots}/>` : null}
        ${r.l === 1 ? svg`<path d="M72 14.500H88" stroke="#aaa" stroke-dasharray=${dots}/>` : null}
        ${r.l === 0 ? svg`<path d="M37 14.500H54" stroke="#aaa" stroke-dasharray=${dots}/>` : null}
        ${r.box ? svg`<g transform="translate(${x - 7},7)"><rect x=".5" y=".5" width="14" height="14" fill="#e8eaee" stroke="#999"/><path d="M3 7.500H12${r.box === "+" ? "M7.500 3V12" : ""}" stroke="#3d5fb8"/></g>` : null}
        ${r.l === 2 ? svg`<rect x="116" y="2.500" width="22" height="22" fill="none" stroke="#555" stroke-dasharray="3 2"/><rect x="118.500" y="5" width="17" height="17" fill=${r.fill ? "#62ade6" : "#f2f2f2"} stroke="#666"/>` : null}
        ${r.kind === "views" ? svg`<path d="M56 7V3h4M78 7V3h-4M56 19v4h4M78 19v4h-4" fill="none" stroke="#555" stroke-width="2"/><rect x="61" y="7" width="12" height="12" rx="2" fill="#ddd" stroke="#555" stroke-width="2"/>` : null}
        ${r.kind === "legend" ? svg`<rect x="56" y="3" width="22" height="21" fill="#ccc" stroke="#888"/><rect x="56" y="3" width="22" height="5" fill="#888"/><rect x="59" y="10" width="5" height="5" fill="#666"/><circle cx="61" cy="19" r="3" fill="#666"/><path d="M66 11h9M66 14h9M66 18h9M66 21h9" stroke="#eee"/>` : null}
      </svg>
      <span class=${r.bold ? "sel" : `t${r.l}`}>${r.t}</span>
    </div>`;
  }

  private propRow(p: (typeof PROPS)[number]) {
    if ("head" in p) return html`<div class="phd"><span>${p.head}</span>${dblUp()}</div>`;
    return html`<div class="pk">${p.k}</div>
      <div class="pv ${p.cls ?? ""}">${p.check === undefined ? p.v : html`<div class="ck">${p.check ? html`<svg width="18" height="18" viewBox="0 0 18 18"><path d="M3 9l4 4 8-9" fill="none" stroke="#444" stroke-width="1.6"/></svg>` : null}</div>`}</div>
      <div class="ps">${p.grip ? html`<div class="gripb"></div>` : null}</div>`;
  }

  render() {
    return html`<div class="stage">
      <div class="window">
        <div class="qat">
          ${strip(QAT_LEFT)}
          <span class="bigA">A</span>
          ${strip(QAT_MID)}
          <div class="wctl">
            ${strip(QAT_RIGHT)}
            <svg class="min" width="14" height="16" viewBox="0 0 14 16"><rect y="12" width="14" height="4" fill="#333"/></svg>
            <svg class="max" width="18" height="19" viewBox="0 0 18 19"><rect x="1" y="1.500" width="16" height="16" fill="none" stroke="#222" stroke-width="2"/><rect width="18" height="4" fill="#222"/></svg>
            <svg class="close" width="18" height="18" viewBox="0 0 18 18"><path d="M2 1l14 16M16 1L2 17" stroke="#222" stroke-width="3"/></svg>
          </div>
        </div>

        <div class="tabs">
          <div class="file">Файл</div>
          ${TABS.map((t) => html`<span>${t}</span>`)}
          <div class="tail">
            <svg class="ff" width="15" height="18" viewBox="0 0 15 18"><path d="M1 2l6 7-6 7ZM8 2l6 7-6 7Z" fill="#fff"/></svg>
            ${I.tabicon}${caret()}
          </div>
        </div>

        <div class="ribbon">
          <section class="panel p-sel">
            <div class="body"><div class="select">${I.cursor}<span class="lab">Изменить</span></div></div>
            <div class="title"><span>Выбор</span>${caret()}</div>
          </section>
          <section class="panel p-prop">
            <div class="body"><div class="col">${I.typeprops}<div class="propbtn">${I.props}</div></div></div>
            <div class="title">Свойства</div>
          </section>
          <section class="panel p-clip">
            <div class="body">
              <div class="bigbtn paste"><div class="art">${I.paste}</div><div class="lab">Вставить</div>${caret()}</div>
              <div class="rows3 clip">${I.scissors}${I.copy}${I.matchbrush}</div>
            </div>
            <div class="title">Буфер обмена</div>
          </section>
          <section class="panel p-geo">
            <div class="body"><div class="geo">
              <div class="cmd">${I.cutin}Врезка${caret()}</div>${I.g1}${I.g2}<span></span>
              <div class="cmd">${I.cutout}Вырезать${caret()}</div>${I.g3}${I.g4}${caret()}
              <div class="cmd">${I.join}Соединить${caret()}</div>${I.g5}${I.g6}<span></span>
            </div></div>
            <div class="title">Геометрия</div>
          </section>
          <section class="panel p-act">
            <div class="body"><div class="bigbtn"><div class="art">${I.activate}</div><div class="lab">Активировать</div></div></div>
            <div class="title">Управление</div>
          </section>
          <section class="panel p-mod">
            <div class="body">
              <div class="big4">${I.align}${I.offset}${I.mirrorpick}${I.mirrordraw}${I.move}${I.copy2}${I.rotate}${I.trim}</div>
              <div class="rows3 small3">${I.s1}${I.s2}${I.s3}${I.s4}${I.s5}${I.s6}${I.s7}${I.s8}${I.redx}</div>
            </div>
            <div class="title">Изменить</div>
          </section>
          <section class="panel p-view">
            <div class="body"><div class="view">${I.bulb}${caret()}${I.v2}${I.brush}${caret()}${I.v4}${I.eraser}</div></div>
            <div class="title">Вид</div>
          </section>
          <section class="panel p-meas">
            <div class="body"><div class="measure">${I.dimalign}${caret()}${I.dimdiag}${caret()}</div></div>
            <div class="title">Измерить</div>
          </section>
          <section class="panel p-make">
            <div class="body"><div class="create">${I.c1}${I.c2}${I.c3}${I.c4}</div></div>
            <div class="title">Создание</div>
          </section>
          <section class="panel base">
            <div class="body"><div class="bigbtn"><div class="art">${I.spread}</div><div class="lab">Распространить<br />границы</div></div></div>
            <div class="title">Основа</div>
          </section>
        </div>

        <div class="ctx">Изменить | Уровни</div>

        <div class="work">
          <div class="pane browser">
            <div class="phead"><span>Диспетчер проекта - Курсовая работа...</span>${smallX()}</div>
            <div class="tmain">
              <div class="tree">${TREE.map((r, i) => this.row(r, i))}</div>
              <div class="vbar"><div class="up">${chev("up")}</div><div class="thumb"></div><div class="dn">${chev("down")}</div></div>
            </div>
            <div class="hbar"><div class="arr">${chev("left")}</div><div class="thumb"></div><div class="arr end">${chev("right")}</div></div>
          </div>

          <div class="pane center">
            <div class="vtabs">
              <div class="vtab off"><svg width="24" height="22" viewBox="0 0 24 22"><path d="M2 10L12 2l10 8v9a2 2 0 0 1-2 2H4a2 2 0 0 1-2-2Z" fill="#ddd" stroke="#aaa" stroke-width="2"/><path d="M2 10h14l6-6M16 10v11" stroke="#aaa" fill="none"/></svg>{3D}</div>
              <div class="vtab on"><svg width="24" height="22" viewBox="0 0 24 22"><path d="M12 1L1 11h5v10h12V11h5Z" fill="#555"/><rect x="8.500" y="11" width="7" height="8" fill="#ddd"/></svg>Южный<span class="x">${smallX()}</span></div>
              <svg class="menu" width="12" height="12" viewBox="0 0 12 12"><path d="M0 1h12v2H0ZM0 5h12L6 12Z" fill="#444"/></svg>
            </div>
            <div class="cmain">
              ${drawing()}
              <div class="cbar"><div class="up">${chev("up")}</div><div class="thumb"></div><div class="dn">${chev("down")}</div></div>
            </div>
            <div class="vbarb">
              <div class="scale">1 : 50</div>
              <div class="tools">${strip(VIEW_TOOLS)}</div>
              <div class="thumb"></div>
              <div class="rarr">${chev("right")}</div>
              <svg class="grip" width="10" height="10" viewBox="0 0 10 10"><path d="M8 0h2v2H8ZM8 4h2v2H8ZM4 4h2v2H4ZM8 8h2v2H8ZM4 8h2v2H4ZM0 8h2v2H0Z" fill="#aaa"/></svg>
            </div>
          </div>

          <div class="pane propsp">
            <div class="phead"><span>Свойства</span>${smallX()}</div>
            <div class="typebox">
              <div class="thumb"></div>
              <div class="tx">Уровень<br />Верхний брус 8 мм</div>
              <svg class="drop" width="12" height="7" viewBox="0 0 12 7"><path d="M0 0h12L6 7Z" fill="#555"/></svg>
            </div>
            <div class="filter">Уровни (1)<span class="chev">${thinChev("#777")}</span></div>
            <div class="ptable">${PROPS.map((p) => this.propRow(p))}</div>
            <div class="pfill"></div>
            <div class="pfoot"><a>Справка по свойствам</a><div class="apply">Применить</div></div>
          </div>
        </div>

        <div class="status">
          <span class="hint">Щелчок - выбор, TAB - вариант</span>
          <span class="sb-work">${I.worksets}</span>
          <div class="field">${thinChev()}</div>
          <span class="sb-pen">${I.pencilq}</span>
          <span class="sb-zero">:0</span>
          <span class="sb-list">${I.list}</span>
          <span class="sb-enter">${I.enter}</span>
          <div class="field model"><span class="hint">Главная модель</span>${thinChev()}</div>
          <div class="right">
            ${I.link}${I.wedge}${I.pincur}${I.facecur}${I.movecur}${I.ring}
            <span class="filt">${I.funnel}:1</span>
            <span class="seps"><span class="vsep"></span><span class="vsep"></span></span>
          </div>
        </div>
      </div>

      <div class="mark five">5</div>
      <div class="howto">Выделить любой уровень</div>
      <div class="typebtn">
        <svg width="17" height="16" viewBox="0 0 17 16"><path d="M1 1h7v7H1ZM1 9h7v6H1ZM9 1h7v5H9Z" fill="#eee" stroke="#555"/><rect x="9" y="7" width="7" height="8" fill="#fff" stroke="#555"/><rect x="11" y="9" width="3" height="2" fill="#3d6ea5"/></svg>
        <span>Изменить тип</span>
      </div>
      <div class="mark six">6</div>
    </div>`;
  }
}
